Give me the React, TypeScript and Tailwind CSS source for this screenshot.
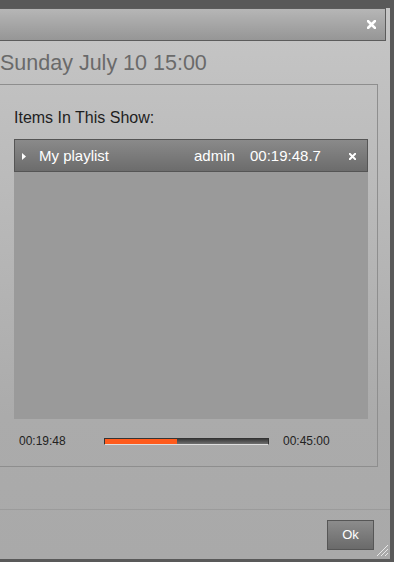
import React from "react"

// Ikon silang tebal (gaya jQuery UI closethick)
function CloseIcon({ size }: { size: number }) {
  return (
    <svg width={size} height={size} viewBox="0 0 8 8" className="block">
      <path d="M1 1L7 7M7 1L1 7" stroke="#ffffff" strokeWidth="2.4" strokeLinecap="square" fill="none" />
    </svg>
  )
}

function ResizeGrip() {
  return (
    <svg width="13" height="13" viewBox="0 0 13 13" className="block">
      <path d="M12 1L1 12M12 5L5 12M12 9L9 12" stroke="#e8e8e8" strokeWidth="1" fill="none" />
    </svg>
  )
}

export default function App() {
  const elapsed = 72 // lebar bagian oranye, px

  return (
    <div className="w-[394px] h-[562px] bg-[#595959] pt-[8px] overflow-hidden font-['Liberation_Sans',Arial,sans-serif]">
      <div className="relative w-[390px] h-[551px] flex flex-col bg-[linear-gradient(180deg,#c6c6c6_0%,#ababab_74%,#a9a9a9_100%)]">
        {/* Title bar */}
        <div className="h-[33px] mr-[4px] border border-l-0 border-[#5c5c5c] bg-gradient-to-b from-[#b6b6b6] to-[#969696] flex items-center justify-end pr-[9px]">
          <CloseIcon size={9} />
        </div>

        {/* Show title */}
        <div className="mt-[10px] text-[21.5px] leading-[24px] text-[#6a6a6a] whitespace-nowrap">
          Sunday July 10 15:00
        </div>

        {/* Show contents box */}
        <div className="mt-[9px] mr-[12px] border border-l-0 border-[#8e8e8e] pl-[14px] pr-[9px] pt-[24px] pb-[18px]">
          <div className="text-[16px] leading-[18px] text-[#1e1e1e]">
            Items In This Show:
          </div>

          <div className="mt-[12px] h-[280px] bg-[#9a9a9a]">
            <div className="h-[33px] border border-[#555555] bg-gradient-to-b from-[#8a8a8a] to-[#6c6c6c] flex items-center pl-[7px] pt-[2px] text-[15px] text-white whitespace-nowrap">
              <svg width="4" height="7" viewBox="0 0 4 7" className="block">
                <polygon points="0,0 4,3.5 0,7" fill="#ffffff" />
              </svg>
              <span className="ml-[13px] w-[155px]">My playlist</span>
              <span className="w-[56px]">admin</span>
              <span className="w-[99px]">00:19:48.7</span>
              <CloseIcon size={7} />
            </div>
          </div>

          {/* Progress */}
          <div className="mt-[15px] h-[14px] flex items-center pl-[5px] text-[12px] leading-[14px] text-[#222222]">
            <span className="w-[85px]">00:19:48</span>
            <div className="w-[165px] h-[7px] border-t border-x border-[#333333] border-b border-b-[#dedede] bg-gradient-to-b from-[#3a3a3a] to-[#707070]">
              <div className="h-full bg-[#ff5b1c]" style={{ width: elapsed }} />
            </div>
            <span className="ml-[14px]">00:45:00</span>
          </div>
        </div>

        {/* Footer */}
        <div className="mt-[42px] h-px bg-[#9b9b9b]" />
        <div className="mt-[10px] flex justify-end pr-[16px]">
          <button className="w-[47px] h-[30px] border border-[#565656] bg-gradient-to-b from-[#8c8c8c] to-[#6a6a6a] text-white text-[13px]">
            Ok
          </button>
        </div>

        <div className="absolute right-[1px] bottom-[2px]">
          <ResizeGrip />
        </div>
      </div>
    </div>
  )
}
